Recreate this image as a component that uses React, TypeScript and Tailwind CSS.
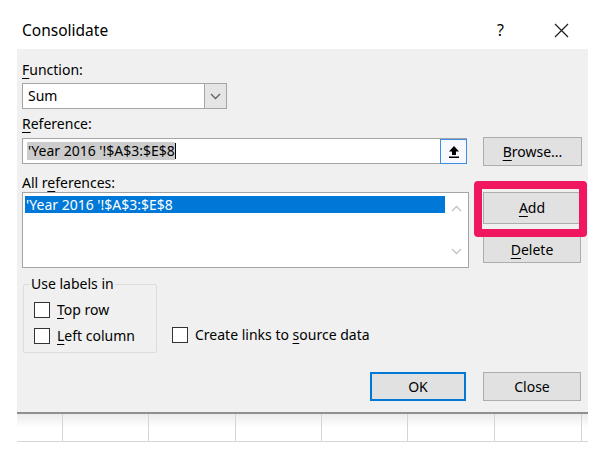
import React from 'react';

const U = ({ children }: { children: React.ReactNode }) => (
  <span className="underline decoration-1 underline-offset-[3px]">{children}</span>
);

const Check = () => <div className="w-[16px] h-[16px] bg-white border border-[#333333] shrink-0" />;

const gridCells = [46, 86, 87, 86, 86, 87, 87];

export default function App() {
  return (
    <div className="w-[607px] h-[460px] bg-white font-['Noto_Sans',Arial,sans-serif] text-black text-[14px] leading-[18px]">
      {/* Title bar */}
      <div className="h-[49px] flex items-center pl-[22px] pr-[38px] pt-[10px]">
        <span className="text-[15.5px]">Consolidate</span>
        <span className="ml-auto text-[16px] mr-[50px]">?</span>
        <svg width="15" height="15" viewBox="0 0 15 15" className="mt-[1px]">
          <path d="M1 1 L14 14 M14 1 L1 14" stroke="#222" strokeWidth="1.3" fill="none" />
        </svg>
      </div>

      {/* Dialog body */}
      <div className="ml-[17px] w-[571px] h-[363px] bg-[#f0f0f0] pl-[5px] pt-[12px] flex flex-col">
        <div>
          <U>F</U>unction:
        </div>
        <div className="mt-[4px] w-[205px] h-[26px] bg-white border border-[#a5a5a5] flex items-center">
          <span className="pl-[5px]">Sum</span>
          <div className="ml-auto w-[23px] h-[26px] -mr-px bg-[#e5e5e5] border border-[#a5a5a5] flex items-center justify-center">
            <svg width="11" height="7" viewBox="0 0 11 7">
              <path d="M1 1 L5.5 5.5 L10 1" stroke="#606060" strokeWidth="1.3" fill="none" />
            </svg>
          </div>
        </div>

        <div className="mt-[6px]">
          <U>R</U>eference:
        </div>
        <div className="mt-[4px] flex items-start">
          <div className="mt-[1px] w-[445px] h-[26px] bg-white border border-[#a5a5a5] flex items-center pl-[4px]">
            <span className="bg-[#cccccc] pl-[1px]">'Year 2016 '!$A$3:$E$8</span>
            <span className="w-px h-[16px] bg-black" />
            <div className="ml-auto mr-[-1px] w-[27px] h-[25px] border border-[#3d8ee0] bg-[#f5f9fd] flex items-center justify-center">
              <svg width="12" height="13" viewBox="0 0 12 13">
                <path d="M6 1 L11 6.5 H8 V10 H4 V6.5 H1 Z" fill="#000" />
                <rect x="1" y="11.5" width="10" height="1.5" fill="#000" />
              </svg>
            </div>
          </div>
          <div className="ml-[16px] w-[99px] h-[29px] bg-[#e1e1e1] border border-[#adadad] flex items-center justify-center">
            <span>
              <U>B</U>rowse...
            </span>
          </div>
        </div>

        <div className="mt-[8px]">
          All r<U>e</U>ferences:
        </div>
        <div className="flex items-start">
          <div className="w-[447px] h-[76px] bg-white border border-[#a5a5a5] flex">
            <div className="flex-1 pt-[3px] pl-[2px]">
              <div className="h-[17px] bg-[#0078d7] text-white flex items-center pl-[1px]">'Year 2016 '!$A$3:$E$8</div>
            </div>
            <div className="w-[23px] flex flex-col items-center justify-between py-[12px]">
              <svg width="11" height="7" viewBox="0 0 11 7">
                <path d="M1 6 L5.5 1.5 L10 6" stroke="#c2c2c2" strokeWidth="1.3" fill="none" />
              </svg>
              <svg width="11" height="7" viewBox="0 0 11 7">
                <path d="M1 1 L5.5 5.5 L10 1" stroke="#c2c2c2" strokeWidth="1.3" fill="none" />
              </svg>
            </div>
          </div>
          <div className="ml-[14px] flex flex-col">
            <div className="relative w-[98px] h-[32px] bg-[#e1e1e1] border border-[#adadad] flex items-center justify-center">
              <span>
                <U>A</U>dd
              </span>
              <div className="absolute -top-[12px] -left-[10px] -right-[7px] -bottom-[14px] border-[8px] border-[#f0175f] rounded-[4px]" />
            </div>
            <div className="mt-[12px] w-[98px] h-[27px] bg-[#e1e1e1] border border-[#adadad] flex items-center justify-center">
              <span>
                <U>D</U>elete
              </span>
            </div>
          </div>
        </div>

        <div className="mt-[7px] flex items-end">
          <fieldset className="ml-[1px] w-[134px] h-[78px] border border-[#dcdcdc] rounded-[2px] pl-[10px] pt-[8px] flex flex-col gap-[8px]">
            <legend className="-ml-[4px] px-[1px]">Use labels in</legend>
            <div className="flex items-center gap-[7px]">
              <Check />
              <span>
                <U>T</U>op row
              </span>
            </div>
            <div className="flex items-center gap-[7px]">
              <Check />
              <span>
                <U>L</U>eft column
              </span>
            </div>
          </fieldset>
          <div className="ml-[15px] mb-[9px] flex items-center gap-[7px]">
            <Check />
            <span>
              Create links to <U>s</U>ource data
            </span>
          </div>
        </div>

        <div className="mt-[19px] flex justify-end pr-[7px] gap-[17px]">
          <div className="w-[96px] h-[29px] bg-[#e1e1e1] border-2 border-[#0078d7] flex items-center justify-center">OK</div>
          <div className="w-[98px] h-[29px] bg-[#e1e1e1] border border-[#adadad] flex items-center justify-center">Close</div>
        </div>
      </div>

      {/* Spreadsheet row behind the dialog */}
      <div className="ml-[17px] w-[571px] border-t-2 border-[#8f8f8f]">
        <div className="h-[28px] flex border-b border-[#d6d6d6] bg-gradient-to-b from-[#ebebeb] via-white to-white">
          {gridCells.map((w, i) => (
            <div key={i} className="h-full border-r border-[#d4d4d4] shrink-0" style={{ width: w }} />
          ))}
        </div>
      </div>
    </div>
  );
}
